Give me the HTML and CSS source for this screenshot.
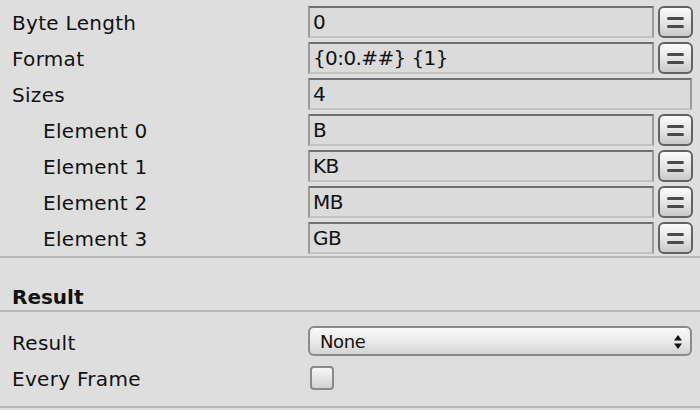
FILE: index.html
```html
<!DOCTYPE html>
<html>
<head>
<meta charset="utf-8">
<link rel="stylesheet" href="styles.css">
</head>
<body>
<div class="inspector">
  <section class="group">
    <div class="row">
      <div class="label">Byte Length</div>
      <div class="value"><div class="field">0</div><button class="eq"><span></span><span></span></button></div>
    </div>
    <div class="row">
      <div class="label">Format</div>
      <div class="value"><div class="field">{0:0.##} {1}</div><button class="eq"><span></span><span></span></button></div>
    </div>
    <div class="row">
      <div class="label">Sizes</div>
      <div class="value"><div class="field">4</div></div>
    </div>
    <div class="row">
      <div class="label indent">Element 0</div>
      <div class="value"><div class="field">B</div><button class="eq"><span></span><span></span></button></div>
    </div>
    <div class="row">
      <div class="label indent">Element 1</div>
      <div class="value"><div class="field">KB</div><button class="eq"><span></span><span></span></button></div>
    </div>
    <div class="row">
      <div class="label indent">Element 2</div>
      <div class="value"><div class="field">MB</div><button class="eq"><span></span><span></span></button></div>
    </div>
    <div class="row">
      <div class="label indent">Element 3</div>
      <div class="value"><div class="field">GB</div><button class="eq"><span></span><span></span></button></div>
    </div>
  </section>
  <section class="header">Result</section>
  <section class="group bottom">
    <div class="row">
      <div class="label">Result</div>
      <div class="value">
        <div class="popup"><span>None</span>
          <svg class="arrows" width="8" height="14" viewBox="0 0 8 14"><path d="M4 0 L8 5.5 L0 5.5 Z M4 14 L8 8.5 L0 8.5 Z" fill="#111"/></svg>
        </div>
      </div>
    </div>
    <div class="row">
      <div class="label">Every Frame</div>
      <div class="value"><div class="check"></div></div>
    </div>
  </section>
</div>
</body>
</html>
```
FILE: styles.css
```css
* { box-sizing: border-box; }
html, body { margin: 0; padding: 0; }
body {
  background: #dedede;
  font-family: "DejaVu Sans", "Noto Sans", sans-serif;
  font-size: 20px;
  color: #111;
  width: 700px;
  height: 410px;
  overflow: hidden;
}
.inspector { display: flex; flex-direction: column; }
.group { padding: 4px 8px 0 12px; border-bottom: 2px solid #b8b8b8; }
.group.bottom { padding-top: 12px; padding-bottom: 10px; }
.row { display: flex; align-items: center; height: 36px; }
.label { width: 296px; flex: none; white-space: nowrap; letter-spacing: 0.3px; padding-top: 2px; }
.label.indent { padding-left: 31px; }
.value { flex: 1; display: flex; align-items: center; gap: 4px; }
.field {
  flex: 1;
  height: 32px;
  background: #dbdbdb;
  border: 2px solid;
  border-color: #707070 #9b9b9b #c2c2c2 #9b9b9b;
  padding: 1px 3px 0;
  line-height: 27px;
  letter-spacing: -0.6px;
  white-space: nowrap;
}
.eq {
  flex: none;
  width: 35px;
  height: 32px;
  margin: 0 -1px 0 0;
  padding: 0;
  border: 2px solid #626262;
  border-radius: 6px;
  background: linear-gradient(#fbfbfb, #e6e6e6 50%, #c9c9c9);
  display: flex;
  flex-direction: column;
  align-items: center;
  justify-content: center;
  gap: 5px;
}
.eq span {
  display: block;
  width: 17px;
  height: 3px;
  border-radius: 2px;
  background: #4a4a4a;
}
.header {
  height: 54px;
  padding: 27px 12px 0;
  font-weight: bold;
  border-bottom: 2px solid #b8b8b8;
}
.popup {
  flex: 1;
  height: 30px;
  margin-top: -2px;
  border: 2px solid #8a8a8a;
  border-radius: 6px;
  background: linear-gradient(#fafafa, #eaeaea 50%, #d3d3d3);
  display: flex;
  align-items: center;
  justify-content: space-between;
  padding: 1px 8px 0 10px;
  font-size: 18px;
  letter-spacing: -0.4px;
}
.arrows { display: block; }
.check {
  width: 24px;
  height: 24px;
  margin-left: 2px;
  border: 2px solid #8a8a8a;
  border-radius: 4px;
  background: linear-gradient(#f7f7f7, #d2d2d2);
}
```
